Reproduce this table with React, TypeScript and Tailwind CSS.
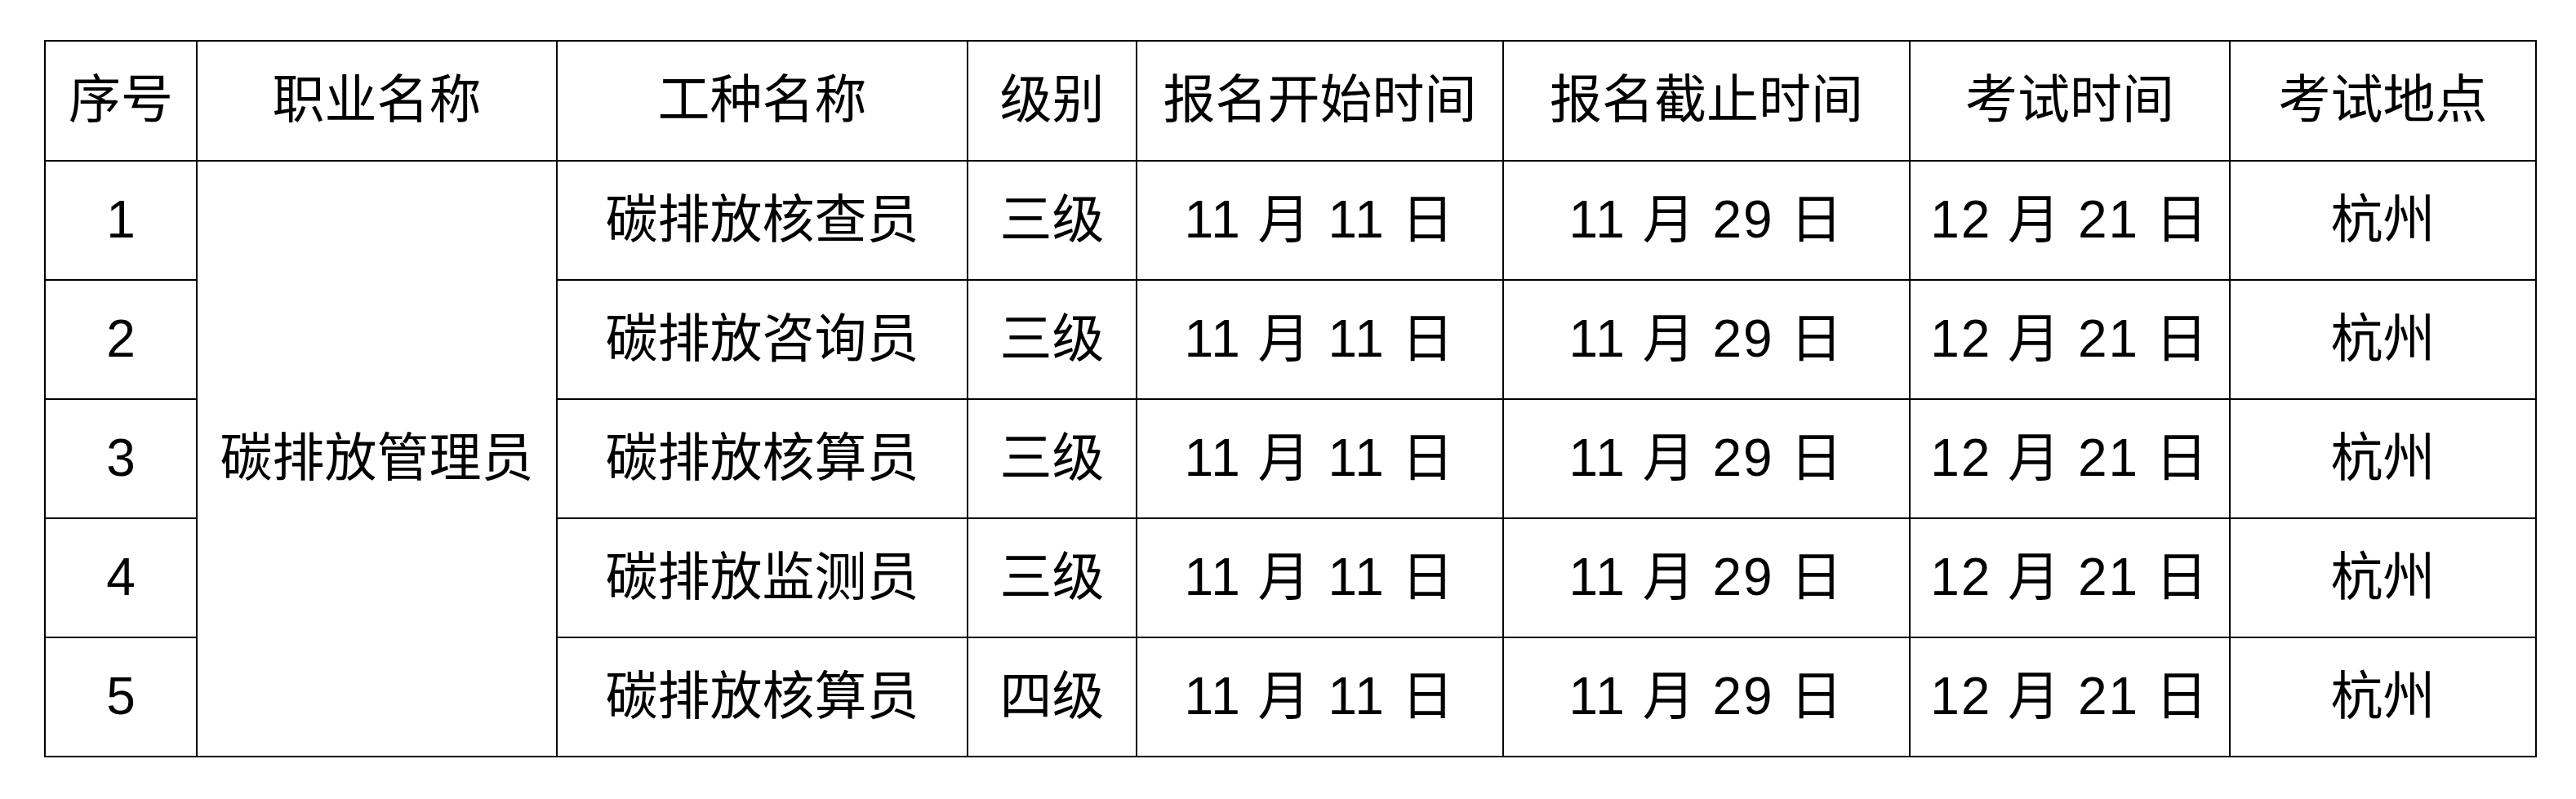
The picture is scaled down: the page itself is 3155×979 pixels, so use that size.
import * as React from 'react';

interface Row {
  no: number;
  kind: string;
  level: string;
  start: string;
  end: string;
  exam: string;
  place: string;
}

const HEADERS = ['序号', '职业名称', '工种名称', '级别', '报名开始时间', '报名截止时间', '考试时间', '考试地点'];

const COLS = [186, 441, 503, 207, 449, 498, 392, 375];

const ROWS: Row[] = [
  { no: 1, kind: '碳排放核查员', level: '三级', start: '11 月 11 日', end: '11 月 29 日', exam: '12 月 21 日', place: '杭州' },
  { no: 2, kind: '碳排放咨询员', level: '三级', start: '11 月 11 日', end: '11 月 29 日', exam: '12 月 21 日', place: '杭州' },
  { no: 3, kind: '碳排放核算员', level: '三级', start: '11 月 11 日', end: '11 月 29 日', exam: '12 月 21 日', place: '杭州' },
  { no: 4, kind: '碳排放监测员', level: '三级', start: '11 月 11 日', end: '11 月 29 日', exam: '12 月 21 日', place: '杭州' },
  { no: 5, kind: '碳排放核算员', level: '四级', start: '11 月 11 日', end: '11 月 29 日', exam: '12 月 21 日', place: '杭州' },
];

const cell = 'border-2 border-black text-center align-middle p-0 pb-[3px] leading-none';

export default function App(): React.ReactElement {
  return (
    <div
      className="min-h-[979px] w-[3155px] bg-white pl-[54px] pt-[49px] text-[64px] text-black"
      style={{ fontFamily: '"Liberation Sans", "Noto Sans CJK SC", sans-serif' }}
    >
      <table className="w-[3053px] table-fixed border-collapse">
        <colgroup>
          {COLS.map((w, i) => (
            <col key={i} style={{ width: w }} />
          ))}
        </colgroup>
        <thead>
          <tr className="h-[147px]">
            {HEADERS.map((h) => (
              <th key={h} className={`${cell} font-normal`}>
                {h}
              </th>
            ))}
          </tr>
        </thead>
        <tbody>
          {ROWS.map((r, i) => (
            <tr key={r.no} className="h-[146px]">
              <td className={cell}>{r.no}</td>
              {i === 0 && (
                <td className={cell} rowSpan={ROWS.length}>
                  碳排放管理员
                </td>
              )}
              <td className={cell}>{r.kind}</td>
              <td className={cell}>{r.level}</td>
              {/* dates: wider digit spacing, like the source font */}
              <td className={`${cell} whitespace-pre tracking-[2px]`}>{r.start}</td>
              <td className={`${cell} whitespace-pre tracking-[2px]`}>{r.end}</td>
              <td className={`${cell} whitespace-pre tracking-[2px]`}>{r.exam}</td>
              <td className={cell}>{r.place}</td>
            </tr>
          ))}
        </tbody>
      </table>
    </div>
  );
}
